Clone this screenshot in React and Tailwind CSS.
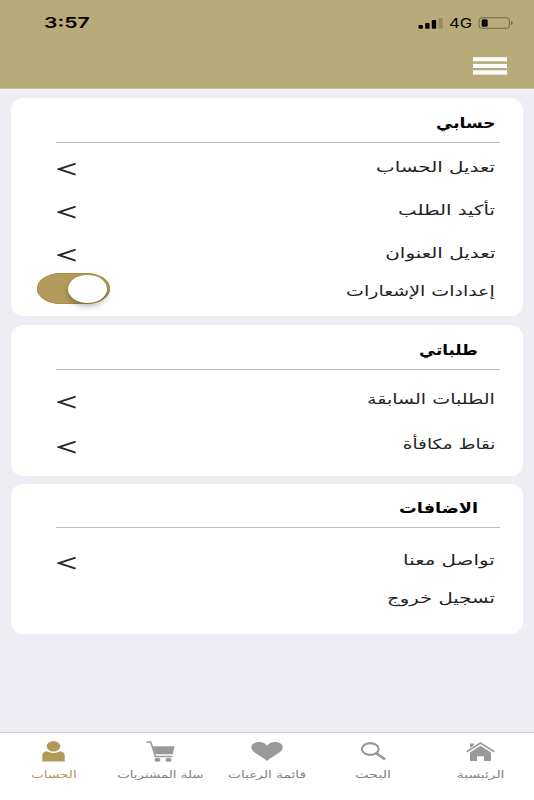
import { useLayoutEffect, useRef, useState } from "react";

// Single-line label stretched horizontally to a given width.
function FitText({ width, className = "", dir = "rtl", children }) {
  const ref = useRef(null);
  const [scale, setScale] = useState(1);
  useLayoutEffect(() => {
    setScale(width / ref.current.offsetWidth);
  }, [width]);
  return (
    <span dir={dir} className="flex shrink-0 justify-start" style={{ width }}>
      <span
        ref={ref}
        className={`block shrink-0 whitespace-nowrap ${dir === "rtl" ? "origin-right" : "origin-left"} ${className}`}
        style={{ transform: `scaleX(${scale})` }}
      >
        {children}
      </span>
    </span>
  );
}

function Chevron() {
  return (
    <svg className="mt-[5px] h-[14px] w-[20px]" viewBox="0 0 20 14" fill="none" stroke="#262626" strokeWidth="1.9">
      <path d="M18.6 1.7 2 7.2l16.6 5.5" />
    </svg>
  );
}

function Toggle() {
  return (
    <div className="-ml-5 -mt-2 flex h-[31px] w-[73px] items-center justify-end rounded-[24px/50%] bg-[#b39c5b] pr-[3px] shadow-[inset_0_0_0_1px_#a98f45]">
      <div className="h-[28px] w-[39px] rounded-[50%] bg-white shadow-[0_3px_6px_rgba(0,0,0,0.3)]" />
    </div>
  );
}

function Row({ label, width, className, children }) {
  return (
    <div className={`flex items-start justify-between pl-[46px] pr-[28px] ${className}`}>
      <div>{children}</div>
      <FitText width={width} className="text-[14px] leading-5 text-[#222]">{label}</FitText>
    </div>
  );
}

function Card({ title, width, className, titleClass, children }) {
  return (
    <section className={`mx-[11px] rounded-[12px] bg-white ${className}`}>
      <div className={`ml-[45px] mr-[23px] flex border-b border-[#bcbcbc] ${titleClass}`}>
        <FitText width={width} className="text-[15px] font-bold leading-5 text-black">{title}</FitText>
      </div>
      {children}
    </section>
  );
}

function Tab({ label, width, active, className, children }) {
  return (
    <div className={`flex flex-col items-center ${active ? "text-[#b09a58]" : "text-[#999]"} ${className}`}>
      <div className="flex h-[35px] items-start pt-2">{children}</div>
      <FitText width={width} className={`text-[10px] leading-[14px] ${active ? "text-[#b09a58]" : "text-[#828282]"}`}>
        {label}
      </FitText>
    </div>
  );
}

export default function App() {
  return (
    <div className="flex h-[800px] w-[534px] flex-col overflow-hidden bg-[#eeedf3] font-['DejaVu_Sans',sans-serif]">
      <header className="h-[89px] shrink-0 border-b border-[#c9c1a8] bg-[#b9aa79]">
        <div className="flex h-[46px] items-center justify-between pl-[44px] pr-[20px]">
          <FitText dir="ltr" width={45} className="font-['Inter','Liberation_Sans',sans-serif] text-[15px] font-semibold leading-5 text-black">
            3:57
          </FitText>
          <div className="flex items-center">
            <svg className="mr-[6px] h-[12px] w-[25px]" viewBox="0 0 25 12">
              <rect x="0.5" y="8" width="4.4" height="3.7" rx="1" />
              <rect x="7.2" y="6" width="4.4" height="5.7" rx="1" />
              <rect x="13.8" y="3" width="4.4" height="8.7" rx="1" />
              <rect x="20.4" y="1" width="4.4" height="10.7" rx="1" fill="#978a65" />
            </svg>
            <FitText dir="ltr" width={23} className="font-['Inter','Liberation_Sans',sans-serif] text-[13px] leading-5 text-black">
              4G
            </FitText>
            <svg className="ml-[6px] h-[12px] w-[36px]" viewBox="0 0 36 12">
              <rect x="1" y="0.7" width="30.4" height="10.6" rx="3" fill="none" stroke="#6f6648" />
              <rect x="3.7" y="2.3" width="6" height="7.4" rx="1.5" />
              <path d="M33 4q3.6 2 0 4z" fill="#6f6648" />
            </svg>
          </div>
        </div>
        <svg className="ml-[473px] mt-[11px] h-[18px] w-[34px]" viewBox="0 0 34 18" fill="#fff">
          <rect y="0.2" width="34" height="4.1" />
          <rect y="6.9" width="34" height="4.1" />
          <rect y="13.3" width="34" height="4.4" />
        </svg>
      </header>

      <main className="flex grow flex-col gap-[9px] pt-[9px]">
        <Card title="حسابي" width={60} className="h-[218px]" titleClass="h-[45px] pt-[15px] justify-end pr-[4px]">
          <Row label="تعديل الحساب" width={119} className="mt-[14px] h-[43px]"><Chevron /></Row>
          <Row label="تأكيد الطلب" width={97} className="h-[43px]"><Chevron /></Row>
          <Row label="تعديل العنوان" width={111} className="h-[38px]"><Chevron /></Row>
          <Row label="إعدادات الإشعارات" width={149} className="h-[30px]"><Toggle /></Row>
        </Card>
        <Card title="طلباتي" width={59} className="h-[151px]" titleClass="h-[45px] pt-[15px] justify-end pr-[22px]">
          <Row label="الطلبات السابقة" width={128} className="mt-[19px] h-[45px]"><div className="pt-px"><Chevron /></div></Row>
          <Row label="نقاط مكافأة" width={92} className="h-[40px]"><div className="pt-px"><Chevron /></div></Row>
        </Card>
        <Card title="الاضافات" width={79} className="-mt-px h-[150px]" titleClass="h-[44px] pt-[14px] justify-end pr-[22px]">
          <Row label="تواصل معنا" width={92} className="mt-[22px] h-[38px]"><div className="pt-px"><Chevron /></div></Row>
          <Row label="تسجيل خروج" width={108} className="h-[38px]" />
        </Card>
      </main>

      <nav className="flex h-[68px] shrink-0 border-t border-[#d2d1d7] bg-white">
        <Tab active label="الحساب" width={46} className="w-[107px]">
          <svg className="h-[21px] w-[23px]" viewBox="0 0 23 21" fill="currentColor">
            <ellipse cx="11.5" cy="5.3" rx="6.8" ry="5.2" />
            <path d="M5 10.3C2 10.7.3 12 .3 14.5V20.5h22.4v-6c0-2.5-1.7-3.8-4.7-4.2-3.5 2.3-9.5 2.3-13 0z" />
          </svg>
        </Tab>
        <Tab label="سلة المشتريات" width={87} className="w-[107px]">
          <svg className="h-[21px] w-[29px]" viewBox="0 0 29 21" fill="currentColor">
            <path d="M6.3 5.2H28.5L26.8 13.2H9.5z" />
            <path d="M.5.9H4.7L9.3 15.5H26.3" fill="none" stroke="currentColor" strokeWidth="1.5" />
            <ellipse cx="11.5" cy="18.7" rx="3" ry="2" />
            <ellipse cx="22.5" cy="18.7" rx="3" ry="2" />
          </svg>
        </Tab>
        <Tab label="قائمة الرغبات" width={78} className="w-[106px]">
          <svg className="mt-px h-[19px] w-[32px]" viewBox="0 0 32 19" fill="currentColor">
            <path d="M16 19C12.5 15.5 7 13.2 3 10 .8 8.2.3 6.6.3 5.3.3 2.3 3.8.1 8 .1c3.6 0 6.5 1.3 8 3.7C17.5 1.4 20.4.1 24 .1c4.2 0 7.7 2.2 7.7 5.2 0 1.3-.5 2.9-2.7 4.7-4 3.2-9.5 5.5-13 9z" />
          </svg>
        </Tab>
        <Tab label="البحث" width={36} className="w-[107px]">
          <svg className="mt-px h-[19px] w-[26px]" viewBox="0 0 26 19" fill="none" stroke="currentColor">
            <ellipse cx="9.3" cy="7" rx="8.4" ry="5.9" strokeWidth="2.1" />
            <path d="m15.3 11.3 8.8 6" strokeWidth="2.7" />
          </svg>
        </Tab>
        <Tab label="الرئيسية" width={47} className="w-[107px]">
          <svg className="mt-px h-[19px] w-[29px]" viewBox="0 0 29 19" fill="currentColor">
            <path d="M.7 9.8 14.5 1 28.3 9.8" fill="none" stroke="currentColor" strokeWidth="1.7" />
            <path d="M4 1.5h4v1.8L4 5.8zM4 10.5 14.5 3.8 25 10.5V19h-7v-4.8h-7V19H4z" />
          </svg>
        </Tab>
      </nav>
    </div>
  );
}
